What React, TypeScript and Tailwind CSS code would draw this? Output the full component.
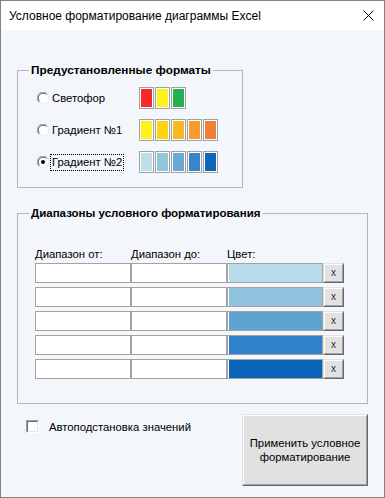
import React from 'react';

const presets = [
  { label: 'Светофор', colors: ['#f52a2a', '#fbf21b', '#22b24f'], checked: false },
  { label: 'Градиент №1', colors: ['#fef01c', '#fdd311', '#f9b920', '#f69b2c', '#ee7f33'], checked: false },
  { label: 'Градиент №2', colors: ['#bcdeeb', '#94c5df', '#6aa9d6', '#3686c9', '#0e66b9'], checked: true },
];

const rangeColors = ['#b9dcea', '#8fc3e0', '#5fa3d2', '#2f82c9', '#0a64b8'];

function Radio({ checked }: { checked: boolean }) {
  return (
    <svg width="12" height="12" viewBox="0 0 12 12" className="shrink-0">
      <circle cx="6" cy="6" r="5.5" fill="#ffffff" />
      <path d="M1.8 10.2 A5.9 5.9 0 0 1 10.2 1.8" stroke="#a0a0a0" strokeWidth="1" fill="none" />
      <path d="M2.6 9.4 A4.8 4.8 0 0 1 9.4 2.6" stroke="#5a5a5a" strokeWidth="1" fill="none" />
      <path d="M10.2 1.8 A5.9 5.9 0 0 1 1.8 10.2" stroke="#e6e6e6" strokeWidth="1" fill="none" />
      {checked && <circle cx="6" cy="6" r="2" fill="#000000" />}
    </svg>
  );
}

function Swatch({ color }: { color: string }) {
  return (
    <div className="w-[15px] h-[22px] border border-[#a0a0a0] bg-white p-px">
      <div className="w-full h-full" style={{ backgroundColor: color }} />
    </div>
  );
}

function RaisedButton({ className, children }: { className: string; children: React.ReactNode }) {
  return (
    <div className={`border border-t-[#e3e3e3] border-l-[#e3e3e3] border-r-[#696969] border-b-[#696969] ${className}`}>
      <div className="w-full h-full border border-t-white border-l-white border-r-[#a0a0a0] border-b-[#a0a0a0] bg-[#e1e1e1] flex items-center justify-center text-center">
        {children}
      </div>
    </div>
  );
}

export default function App() {
  return (
    <div className="w-[385px] h-[498px] border border-[#838383] bg-[#f3f6fa] flex flex-col font-['Liberation_Sans',Arial,sans-serif] text-[11.3px] text-black overflow-hidden">
      {/* Title bar */}
      <div className="h-[29px] bg-white flex items-center pl-[8px] pr-[10px] shrink-0">
        <span className="flex-1 text-[12px] leading-[16px]">Условное форматирование диаграммы Excel</span>
        <svg width="11" height="11" viewBox="0 0 11 11">
          <path d="M0.5 0.5 L10.5 10.5 M10.5 0.5 L0.5 10.5" stroke="#000" strokeWidth="1" />
        </svg>
      </div>

      <div className="flex-1 px-[16px] pt-[33px] flex flex-col">
        {/* Presets */}
        <fieldset className="w-[226px] border border-[#b4b8bc]">
          <legend className="ml-[11px] px-[2px] font-bold text-[11.8px] leading-[14px]">Предустановленные форматы</legend>
          <div className="flex flex-col gap-[10px] pt-[10px] pb-[14px] pl-[19px]">
            {presets.map((p) => (
              <div key={p.label} className="flex items-center h-[22px]">
                <div className="w-[102px] flex items-center">
                  <Radio checked={p.checked} />
                  <span
                    className={`ml-px px-px leading-[15px] border ${
                      p.checked ? 'border-dotted border-black' : 'border-transparent'
                    }`}
                  >
                    {p.label}
                  </span>
                </div>
                <div className="flex gap-px">
                  {p.colors.map((c) => (
                    <Swatch key={c} color={c} />
                  ))}
                </div>
              </div>
            ))}
          </div>
        </fieldset>

        {/* Ranges */}
        <fieldset className="mt-[18px] w-full border border-[#b4b8bc]">
          <legend className="ml-[11px] px-[2px] font-bold text-[11.5px] leading-[14px]">
            Диапазоны условного форматирования
          </legend>
          <div className="pt-[28px] pb-[24px] pl-[17px]">
            <div className="flex leading-[13px] mb-[2px]">
              <span className="w-[96px]">Диапазон от:</span>
              <span className="w-[96px]">Диапазон до:</span>
              <span className="w-[96px]">Цвет:</span>
            </div>
            <div className="flex flex-col gap-[4px]">
              {rangeColors.map((c) => (
                <div key={c} className="flex h-[20px]">
                  <div className="w-[96px] h-full border border-[#a3a3a3] bg-white" />
                  <div className="w-[96px] h-full border border-[#a3a3a3] bg-white" />
                  <div className="w-[96px] h-full border border-[#a3a3a3] bg-white pl-px">
                    <div className="w-full h-full" style={{ backgroundColor: c }} />
                  </div>
                  <RaisedButton className="w-[21px] h-full">
                    <span className="text-[10px] leading-none -mt-px text-[#333]">x</span>
                  </RaisedButton>
                </div>
              ))}
            </div>
          </div>
        </fieldset>

        {/* Bottom */}
        <div className="mt-[10px] flex items-start">
          <div className="ml-[9px] mt-[4px] flex items-center">
            <div className="w-[13px] h-[13px] border border-t-[#a0a0a0] border-l-[#a0a0a0] border-r-white border-b-white">
              <div className="w-full h-full border border-t-[#696969] border-l-[#696969] border-r-[#e3e3e3] border-b-[#e3e3e3] bg-white" />
            </div>
            <span className="ml-[10px] pt-[2px] leading-[14px]">Автоподстановка значений</span>
          </div>
          <RaisedButton className="ml-auto w-[126px] h-[72px]">
            <span className="leading-[14px]">
              Применить условное
              <br />
              форматирование
            </span>
          </RaisedButton>
        </div>
      </div>
    </div>
  );
}
